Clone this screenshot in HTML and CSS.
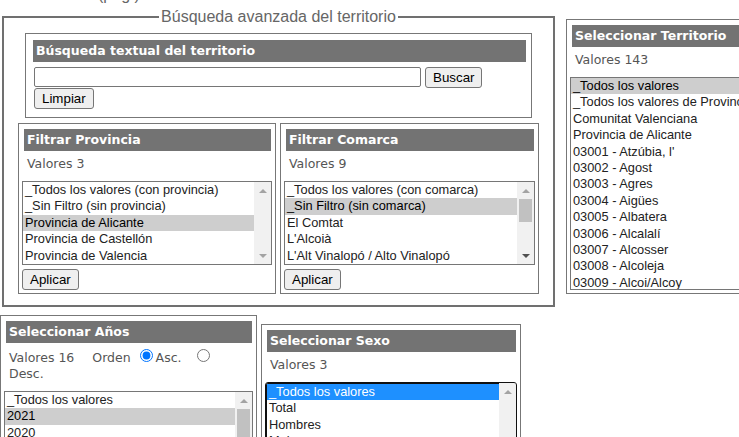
FILE: index.html
```html
<!DOCTYPE html>
<html lang="es">
<head>
<meta charset="utf-8">
<title>Búsqueda avanzada del territorio</title>
<link rel="stylesheet" href="styles.css">
</head>
<body>
<p class="crumb">(pág.)</p>

<div class="top-row">
  <fieldset class="advanced">
    <legend>Búsqueda avanzada del territorio</legend>

    <div class="search-panel">
      <div class="panel-title">Búsqueda textual del territorio</div>
      <div class="search-form">
        <div class="search-line">
          <input class="text-input" type="text">
          <button class="btn" type="button">Buscar</button>
        </div>
        <button class="btn" type="button">Limpiar</button>
      </div>
    </div>

    <div class="filters">
      <section class="panel filter">
        <div class="panel-title">Filtrar Provincia</div>
        <div class="count">Valores 3</div>
        <div class="listbox lb-5">
          <div class="options">
            <div class="opt">_Todos los valores (con provincia)</div>
            <div class="opt">_Sin Filtro (sin provincia)</div>
            <div class="opt sel">Provincia de Alicante</div>
            <div class="opt">Provincia de Castellón</div>
            <div class="opt">Provincia de Valencia</div>
          </div>
          <div class="sb"><span class="sb-up"></span><span class="sb-down"></span></div>
        </div>
        <button class="btn apply" type="button">Aplicar</button>
      </section>

      <section class="panel filter wide">
        <div class="panel-title">Filtrar Comarca</div>
        <div class="count">Valores 9</div>
        <div class="listbox lb-5">
          <div class="options">
            <div class="opt">_Todos los valores (con comarca)</div>
            <div class="opt sel">_Sin Filtro (sin comarca)</div>
            <div class="opt">El Comtat</div>
            <div class="opt">L'Alcoià</div>
            <div class="opt">L'Alt Vinalopó / Alto Vinalopó</div>
          </div>
          <div class="sb"><span class="sb-up"></span><span class="sb-thumb" style="height:23px"></span><span class="sb-down on"></span></div>
        </div>
        <button class="btn apply" type="button">Aplicar</button>
      </section>
    </div>
  </fieldset>

  <section class="panel territory">
    <div class="panel-title">Seleccionar Territorio</div>
    <div class="count">Valores 143</div>
    <div class="listbox lb-terr">
      <div class="options">
        <div class="opt sel">_Todos los valores</div>
        <div class="opt">_Todos los valores de Provincia</div>
        <div class="opt">Comunitat Valenciana</div>
        <div class="opt">Provincia de Alicante</div>
        <div class="opt">03001 - Atzúbia, l'</div>
        <div class="opt">03002 - Agost</div>
        <div class="opt">03003 - Agres</div>
        <div class="opt">03004 - Aigües</div>
        <div class="opt">03005 - Albatera</div>
        <div class="opt">03006 - Alcalalí</div>
        <div class="opt">03007 - Alcosser</div>
        <div class="opt">03008 - Alcoleja</div>
        <div class="opt">03009 - Alcoi/Alcoy</div>
      </div>
      <div class="sb"><span class="sb-up"></span><span class="sb-thumb" style="height:12px"></span><span class="sb-down on"></span></div>
    </div>
  </section>
</div>

<div class="bottom-row">
  <section class="panel years">
    <div class="panel-title">Seleccionar Años</div>
    <div class="count years-count">Valores 16<span class="order">Orden</span> <label class="radio-label"><input type="radio" name="orden" checked>Asc.</label> <label class="radio-label"><input type="radio" name="orden">Desc.</label></div>
    <div class="listbox lb-tall">
      <div class="options">
        <div class="opt">_Todos los valores</div>
        <div class="opt sel">2021</div>
        <div class="opt">2020</div>
        <div class="opt">2019</div>
        <div class="opt">2018</div>
      </div>
      <div class="sb"><span class="sb-up"></span><span class="sb-thumb" style="height:60px"></span><span class="sb-down on"></span></div>
    </div>
  </section>

  <section class="panel sex">
    <div class="panel-title">Seleccionar Sexo</div>
    <div class="count">Valores 3</div>
    <div class="listbox lb-tall focused">
      <div class="options">
        <div class="opt active">_Todos los valores</div>
        <div class="opt">Total</div>
        <div class="opt">Hombres</div>
        <div class="opt">Mujeres</div>
      </div>
      <div class="sb"><span class="sb-up"></span><span class="sb-down"></span></div>
    </div>
  </section>
</div>
</body>
</html>
```

FILE: styles.css
```css
* { box-sizing: border-box; }

html, body {
  margin: 0;
  padding: 0;
  overflow: hidden;
}

body {
  width: 739px;
  height: 437px;
  background: #fff;
  font-family: "DejaVu Sans", Verdana, sans-serif;
  font-size: 12.5px;
  color: #555;
}

.crumb {
  margin: -14px 0 0 0;
  padding-left: 98px;
  height: 18px;
  font: 16px/18px "Liberation Sans", Arial, sans-serif;
  color: #666;
}

.top-row {
  display: flex;
  align-items: flex-start;
  width: 900px;
}

.advanced {
  flex: none;
  width: 553px;
  min-width: 0;
  margin: 4px 0 0 2px;
  padding: 7px 14px 11px;
  border: 2px solid #707070;
}

.advanced legend {
  margin: 0 auto;
  padding: 0 2px;
  font: 16px/18px "Liberation Sans", Arial, sans-serif;
  color: #666;
}

.search-panel {
  width: 507px;
  margin: 0 auto 5px;
  padding: 6px 5px 8px 7px;
  border: 1px solid #777;
}

.panel-title {
  height: 22px;
  padding-left: 3px;
  background: #737373;
  color: #fff;
  font-weight: bold;
  line-height: 22px;
  white-space: nowrap;
  overflow: hidden;
}

.search-form {
  padding: 5px 0 0 1px;
}

.search-line {
  display: flex;
  align-items: flex-start;
  gap: 4px;
}

.text-input {
  width: 387px;
  height: 20px;
  margin: 0;
  border: 1px solid #767676;
  border-radius: 2px;
  padding: 1px 2px;
  font: 13.333px "Liberation Sans", Arial, sans-serif;
}

.btn {
  display: block;
  height: 21px;
  margin: 0;
  padding: 0 7px;
  border: 1px solid #767676;
  border-radius: 3px;
  background: #efefef;
  color: #000;
  font: 13.333px/17px "Liberation Sans", Arial, sans-serif;
}

.filters {
  display: flex;
  gap: 4px;
}

.panel {
  flex: none;
  border: 1px solid #777;
  padding: 5px 3px 3px;
  background: #fff;
}

.panel .panel-title {
  margin: 0 1px 0 2px;
}

.filter { width: 258px; }
.filter.wide { width: 259px; }

.count {
  margin: 5px 0 9px;
  padding-left: 5px;
  line-height: 16px;
}

.listbox {
  display: flex;
  border: 1px solid #767676;
  background: #fff;
  font: 12.8px "Liberation Sans", Arial, sans-serif;
  color: #222;
  overflow: hidden;
}

.lb-5 { height: 84px; }
.lb-terr { height: 213px; }
.lb-tall { height: 160px; }

.options {
  flex: 1;
  min-width: 0;
  overflow: hidden;
}

.opt {
  padding: 0 2px 1px;
  line-height: 15.4px;
  white-space: nowrap;
}

.opt.sel {
  background: #cecece;
  color: #000;
}

.opt.active {
  background: #1e90ff;
  color: #fff;
}

.listbox.focused {
  border-color: #101010;
  border-radius: 3px;
  box-shadow: inset 0 0 0 1px #101010;
}

.listbox.focused .options { padding: 1px 0 0 1px; }

.sb {
  flex: none;
  width: 17px;
  display: flex;
  flex-direction: column;
  background: #f1f1f1;
}

.sb-up, .sb-down {
  flex: none;
  height: 17px;
  display: flex;
  align-items: center;
  justify-content: center;
}

.sb-down { margin-top: auto; }

.sb-up::after {
  content: "";
  border-left: 4px solid transparent;
  border-right: 4px solid transparent;
  border-bottom: 4px solid #a3a3a3;
}

.sb-down::after {
  content: "";
  border-left: 4px solid transparent;
  border-right: 4px solid transparent;
  border-top: 4px solid #a3a3a3;
}

.sb-down.on::after { border-top-color: #505050; }

.sb-thumb {
  flex: none;
  margin: 0 2px;
  background: #c1c1c1;
}

.apply { margin-top: 4px; }

.territory {
  width: 220px;
  margin: 15px 0 0 11px;
}

.bottom-row {
  display: flex;
  align-items: flex-start;
}

.years {
  width: 257px;
  margin-top: 8px;
}

.sex {
  width: 260px;
  margin: 17px 0 0 4px;
}

.years-count {
  padding-right: 12px;
}

.order { margin-left: 18px; }

.radio-label { margin-right: 6px; }

.radio-label input {
  width: 13px;
  height: 13px;
  margin: 1px 3px 0 5px;
  accent-color: #0075ff;
}
```
